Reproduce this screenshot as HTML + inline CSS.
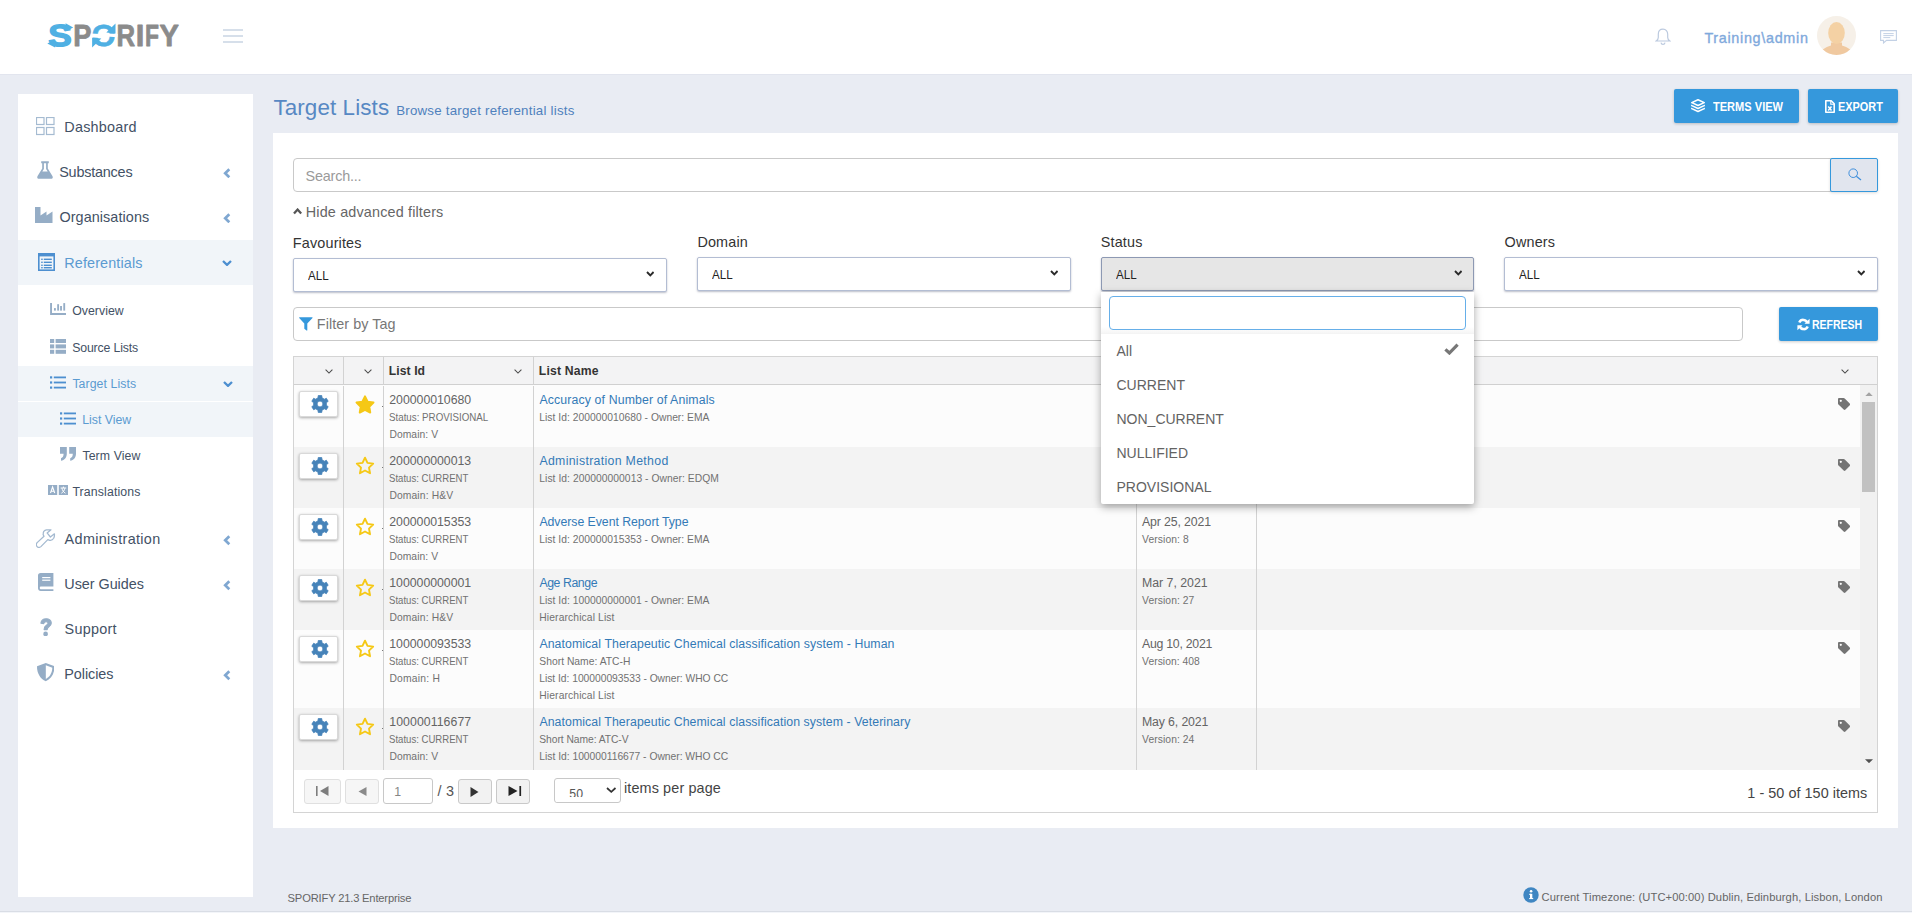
<!DOCTYPE html>
<html lang="en">
<head>
<meta charset="utf-8">
<title>SPORIFY - Target Lists</title>
<style>
*{box-sizing:border-box;margin:0;padding:0}
html,body{width:1912px;height:913px;overflow:hidden}
body{background:#e9ecf3;font-family:"Liberation Sans",sans-serif;color:#333;position:relative;font-size:14px}
.abs{position:absolute}
.t{position:absolute;white-space:nowrap;line-height:1}
#header{position:absolute;left:0;top:0;width:1912px;height:75px;background:#fff;border-bottom:1px solid #e2e5ee}
#sidebar{position:absolute;left:18px;top:94px;width:235px;height:803px;background:#fff}
.hl{position:absolute;left:0;width:235px;background:#f1f4f9}
.m1{font-size:15px;color:#3d4957;letter-spacing:.25px}
.m2{font-size:12.5px;color:#3d4957;letter-spacing:.2px}
.act{color:#5b9bd1}
.chev{position:absolute;left:204px;width:10px;height:12px}
#panel{position:absolute;left:273px;top:133px;width:1625px;height:695px;background:#fff}
.inp{position:absolute;background:#fff;border:1px solid #c9c9c9;border-radius:3px}
.sel{position:absolute;height:35px;background:#fff;border:1px solid #a9b5ce;border-radius:2px;box-shadow:0 1px 2px rgba(0,0,0,.25)}
.sel span{position:absolute;left:15px;top:11px;font-size:13px;color:#222;line-height:1}
.sel svg{position:absolute;right:10px;top:11px}
.lbl{font-size:14.5px;color:#333;letter-spacing:.2px}
.btn{position:absolute;border-radius:2px;background:#3598dc;color:#fff;font-weight:bold;font-size:12px;box-shadow:0 1px 3px rgba(0,0,0,.2)}
#grid{position:absolute;left:293px;top:356px;width:1585px;height:456px;border:1px solid #d5d5d5;background:#fff;overflow:hidden}
.gh{position:absolute;left:0;top:0;width:1583px;height:28px;background:#f3f3f4;border-bottom:1px solid #d5d5d5}
.row{position:absolute;left:0;width:1567px;background:#fbfbfb}
.row.alt{background:#f2f2f2}
.vl{position:absolute;top:0;width:1px;background:#d5d5d5}
.gear{position:absolute;left:5px;width:40px;height:28px;background:#fff;border:1px solid #ccc;box-shadow:0 1px 3px rgba(0,0,0,.3)}
.c1{font-size:12.5px;color:#555;letter-spacing:.3px}
.c2{font-size:10.5px;color:#555;letter-spacing:.2px}
.lnk{font-size:12.5px;color:#337ab7;letter-spacing:.3px}
#dd{z-index:9;position:absolute;left:1101px;top:292px;width:373px;height:212px;background:#fff;box-shadow:0 3px 8px rgba(0,0,0,.35);border-radius:0 0 2px 2px}
.ddi{font-size:14px;color:#555;left:16px}
.pb{position:absolute;height:25px;border:1px solid #c5c5c5;border-radius:3px;background:#f0f0f0}
</style>
</head>
<body>
<div id="header"></div>
<svg class="abs" style="left:40px;top:16px" width="150" height="40" viewBox="40 16 150 40" role="img" aria-label="SPORIFY"><title>SPORIFY</title>
<text font-family="Liberation Sans, sans-serif" font-weight="bold" font-size="30.5" y="46" stroke-width="0.8" stroke-linejoin="round" style="text-rendering:geometricPrecision"><tspan x="48.2" textLength="23.5" lengthAdjust="spacingAndGlyphs" fill="#4fb0e3" stroke="#4fb0e3" stroke-width="1.3">S</tspan><tspan x="73.2" textLength="18.2" lengthAdjust="spacingAndGlyphs" fill="#8b8b8b" stroke="#8b8b8b">P</tspan><tspan x="91.6" textLength="24.2" lengthAdjust="spacingAndGlyphs" fill="#4fb0e3" stroke="#4fb0e3" stroke-width="0.5">O</tspan><tspan x="116.4" textLength="18.6" lengthAdjust="spacingAndGlyphs" fill="#8b8b8b" stroke="#8b8b8b">R</tspan><tspan x="135.8" textLength="8.6" lengthAdjust="spacingAndGlyphs" fill="#8b8b8b" stroke="#8b8b8b">I</tspan><tspan x="144.9" textLength="14" lengthAdjust="spacingAndGlyphs" fill="#8b8b8b" stroke="#8b8b8b">F</tspan><tspan x="159.6" textLength="19.4" lengthAdjust="spacingAndGlyphs" fill="#8b8b8b" stroke="#8b8b8b">Y</tspan></text>
<g fill="#4fb0e3"><path d="M65.6 23.2 73.200 27.500 65.600 31.400z"/><path d="M55.100 39.800 47.300 43.600 55.100 47.500z"/>
<path d="M115.500 23.600 115.500 33.400 106.300 32.600z"/><path d="M92.100 47.600 92.100 37.800 101.300 38.600z"/></g>
<g stroke="#fff" fill="none"><path d="M106.800 35.000 117.500 35.700" stroke-width="3.200"/><path d="M90.500 35.300 100.300 36.000" stroke-width="3.800"/></g>
</svg>
<div class="abs" style="left:223px;top:29px;width:20px;height:2px;background:#d6dfea"></div>
<div class="abs" style="left:223px;top:35px;width:20px;height:2px;background:#d6dfea"></div>
<div class="abs" style="left:223px;top:41px;width:20px;height:2px;background:#d6dfea"></div>
<svg class="abs" style="left:1655px;top:28px" width="16" height="18" viewBox="0 0 16 18" ><path d="M8 1.200c-2.900 0-4.700 2.200-4.700 5v3.300c0 1.500-.8 2.600-2.100 3.500h13.600c-1.300-.9-2.100-2-2.100-3.500V6.200c0-2.800-1.800-5-4.700-5zM6 14.600c.2 1.100 1 1.800 2 1.800s1.800-.7 2-1.800" fill="none" stroke="#bccadf" stroke-width="1.200"/></svg>
<svg class="abs" style="left:1817px;top:16px" width="39" height="39" viewBox="0 0 39 39" ><defs><clipPath id="av"><circle cx="19.5" cy="19.500" r="19.500"/></clipPath></defs><circle cx="19.500" cy="19.500" r="19.500" fill="#f6f0e8"/><g clip-path="url(#av)"><path d="M3 39c1-5.500 5-7.500 11-9.500v-3h11v3c6 2 10 4 11 9.500z" fill="#f0c9a0"/><ellipse cx="19.500" cy="17" rx="8.300" ry="11" fill="#f4d1a4"/></g></svg>
<svg class="abs" style="left:1880px;top:30px" width="17" height="14" viewBox="0 0 17 14" ><path d="M.600.600H16.400V10.400H6.500L3.500 13V10.400H.600z" fill="none" stroke="#c3d1e5" stroke-width="1.100"/><path d="M3.300 3.600h10.400M3.300 5.600h10.400M3.300 7.600h7" stroke="#c3d1e5" stroke-width="1"/></svg>
<div id="sidebar"></div>
<div class="abs" style="left:18px;top:240px;width:235px;height:45px;background:#f1f5f9"></div>
<div class="abs" style="left:18px;top:366px;width:235px;height:35px;background:#f1f5f9"></div>
<div class="abs" style="left:18px;top:402px;width:235px;height:35px;background:#f1f5f9"></div>
<svg class="abs" style="left:36px;top:116.5px" width="19" height="19" viewBox="0 0 19 19" ><rect x="0.5" y="0.5" width="7.5" height="7" fill="none" stroke="#a5bbd1" stroke-width="1.2"/><rect x="0.5" y="10.5" width="7.5" height="7" fill="none" stroke="#a5bbd1" stroke-width="1.2"/><rect x="10.5" y="0.5" width="7.5" height="7" fill="none" stroke="#a5bbd1" stroke-width="1.2"/><rect x="10.5" y="10.5" width="7.5" height="7" fill="none" stroke="#a5bbd1" stroke-width="1.2"/></svg>
<svg class="abs" style="left:36.5px;top:161px" width="16" height="18" viewBox="0 0 16 18" ><path d="M4.2 0.3h7.6v1.9h-1v5.2l4.6 7.6c.9 1.5.1 2.8-1.5 2.8H2.1c-1.600 0-2.400-1.300-1.500-2.800l4.600-7.600V2.200h-1z" fill="#95adc6"/><path d="M6.9 2.200h2.200v5.700l1.600 2.700H5.300l1.600-2.700z" fill="#fff"/></svg>
<svg class="abs" style="left:223px;top:167.7px" width="8" height="10.5" viewBox="0 0 8 10.5" ><path d="M6.300 1.200 2.200 5.250 6.300 9.300" fill="none" stroke="#7fa7d1" stroke-width="2.700"/></svg>
<svg class="abs" style="left:35.2px;top:207px" width="18.5" height="16" viewBox="0 0 18.5 16" ><path d="M0 0h5.500v8.500l6-4v4l6-4V16H0z" fill="#95adc6"/></svg>
<svg class="abs" style="left:223px;top:212.7px" width="8" height="10.5" viewBox="0 0 8 10.5" ><path d="M6.300 1.200 2.200 5.250 6.300 9.300" fill="none" stroke="#7fa7d1" stroke-width="2.700"/></svg>
<svg class="abs" style="left:38px;top:253px" width="17" height="18" viewBox="0 0 17 18" ><rect x="0.8" y="0.8" width="15.4" height="16.400" fill="none" stroke="#4d8fd0" stroke-width="1.6"/><rect x="0.8" y="0.8" width="15.4" height="2.600" fill="#4d8fd0"/><rect x="3.2" y="5.6" width="1.5" height="1.400" fill="#4d8fd0"/><rect x="5.8" y="5.6" width="8" height="1.400" fill="#4d8fd0"/><rect x="3.2" y="8.6" width="1.5" height="1.400" fill="#4d8fd0"/><rect x="5.8" y="8.6" width="8" height="1.400" fill="#4d8fd0"/><rect x="3.2" y="11.6" width="1.5" height="1.400" fill="#4d8fd0"/><rect x="5.8" y="11.6" width="8" height="1.400" fill="#4d8fd0"/><rect x="3.2" y="14.0" width="1.5" height="1.400" fill="#4d8fd0"/><rect x="5.8" y="14.0" width="8" height="1.400" fill="#4d8fd0"/></svg>
<svg class="abs" style="left:222px;top:259.5px" width="10" height="6.5" viewBox="0 0 10 6.5" ><path d="M1 1 5.0 4.9 9 1" fill="none" stroke="#4d8fd0" stroke-width="2.3"/></svg>
<svg class="abs" style="left:50px;top:303px" width="16" height="12" viewBox="0 0 16 12" ><path d="M0.100 0.100h1.900v10h14v1.800H0.100z" fill="#95adc6"/><rect x="4" y="5.1" width="1.850" height="2.50" fill="#95adc6"/><rect x="7.2" y="1.2" width="1.850" height="6.40" fill="#95adc6"/><rect x="10.1" y="3" width="1.850" height="4.60" fill="#95adc6"/><rect x="13.3" y="0.1" width="1.850" height="7.50" fill="#95adc6"/></svg>
<svg class="abs" style="left:50px;top:339px" width="16" height="15" viewBox="0 0 16 15" ><rect x="0" y="0" width="4.2" height="4" fill="#95adc6"/><rect x="5.600" y="0" width="10.400" height="4" fill="#95adc6"/><rect x="0" y="5.4" width="4.2" height="4" fill="#95adc6"/><rect x="5.600" y="5.4" width="10.400" height="4" fill="#95adc6"/><rect x="0" y="10.8" width="4.2" height="4" fill="#95adc6"/><rect x="5.600" y="10.8" width="10.400" height="4" fill="#95adc6"/></svg>
<svg class="abs" style="left:50px;top:375.6px" width="16" height="13" viewBox="0 0 16 13" ><rect x="0" y="0.3" width="2.200" height="2.200" fill="#4d8fd0"/><rect x="3.800" y="0.5" width="12.200" height="1.800" fill="#4d8fd0"/><rect x="0" y="5.4" width="2.200" height="2.200" fill="#4d8fd0"/><rect x="3.800" y="5.6000000000000005" width="12.200" height="1.800" fill="#4d8fd0"/><rect x="0" y="10.5" width="2.200" height="2.200" fill="#4d8fd0"/><rect x="3.800" y="10.7" width="12.200" height="1.800" fill="#4d8fd0"/></svg>
<svg class="abs" style="left:223px;top:380.7px" width="10" height="6.5" viewBox="0 0 10 6.5" ><path d="M1 1 5.0 4.9 9 1" fill="none" stroke="#4d8fd0" stroke-width="2.3"/></svg>
<svg class="abs" style="left:60px;top:411.6px" width="16" height="13" viewBox="0 0 16 13" ><rect x="0" y="0.3" width="2.200" height="2.200" fill="#4d8fd0"/><rect x="3.800" y="0.5" width="12.200" height="1.800" fill="#4d8fd0"/><rect x="0" y="5.4" width="2.200" height="2.200" fill="#4d8fd0"/><rect x="3.800" y="5.6000000000000005" width="12.200" height="1.800" fill="#4d8fd0"/><rect x="0" y="10.5" width="2.200" height="2.200" fill="#4d8fd0"/><rect x="3.800" y="10.7" width="12.200" height="1.800" fill="#4d8fd0"/></svg>
<svg class="abs" style="left:60px;top:447px" width="16" height="14" viewBox="0 0 16 14" ><path d="M0 0h6.800v6.600c0 4-2.200 6.800-5.800 7.200v-2.600c1.800-.6 2.600-2 2.600-4.400H0z" fill="#95adc6"/><path d="M0 0h6.800v6.600c0 4-2.200 6.800-5.800 7.200v-2.600c1.800-.6 2.600-2 2.600-4.400H0z" fill="#95adc6" transform="translate(9.2 0)"/></svg>
<svg class="abs" style="left:48px;top:485px" width="20" height="10" viewBox="0 0 20 10" ><rect x="0" y="0" width="9.2" height="10" fill="#95adc6"/><rect x="10.800" y="0" width="9.2" height="10" fill="#95adc6"/><path d="M2.500 8 4.600 2 6.700 8M3.300 6.200h2.600" stroke="#fff" stroke-width="1.1" fill="none"/><path d="M12.600 3h5.600M15.400 1.600v1.400M13.400 8.200c2-1.200 3-2.800 3.400-5M17.400 8.200c-2-1.200-3-2.800-3.400-5" stroke="#fff" stroke-width="1" fill="none"/></svg>
<svg class="abs" style="left:36px;top:528.5px" width="19.5" height="19.5" viewBox="0 0 19.5 19.5" ><path d="M15 .800 11.100 3.900 14.400 8 18.400 4.800C18.600 6.500 18.400 8 17.700 9.300 16.800 10.800 15.200 11.600 13.700 11.300L11.800 10.600 4.900 17.600C3.600 18.800 2 18.600 1.100 17.600 .200 16.600 .200 15 .900 13.900L8 7.200C7.400 6.400 7.100 5.900 7.200 5.400 7.200 4 7.400 3 7.800 2.400 8.600 1.400 9.400 .900 10.400 .800Z" fill="none" stroke="#a3b9d0" stroke-width="1.250" stroke-linejoin="round"/></svg>
<svg class="abs" style="left:223px;top:535px" width="8" height="10.5" viewBox="0 0 8 10.5" ><path d="M6.300 1.200 2.200 5.250 6.300 9.300" fill="none" stroke="#7fa7d1" stroke-width="2.700"/></svg>
<svg class="abs" style="left:38px;top:573px" width="16" height="18" viewBox="0 0 16 18" ><path d="M2.600 0H15.400v13.600H3.200c-.9 0-1.400.5-1.400 1.300s.5 1.300 1.400 1.300H15.400V18H2.800C1.100 18 0 16.900 0 15.300V2.600C0 1 1 0 2.600 0z" fill="#95adc6"/><rect x="4.200" y="4" width="8.200" height="1.200" fill="#fff"/><rect x="4.200" y="6.600" width="8.200" height="1.200" fill="#fff"/></svg>
<svg class="abs" style="left:223px;top:580px" width="8" height="10.5" viewBox="0 0 8 10.5" ><path d="M6.300 1.200 2.200 5.250 6.300 9.300" fill="none" stroke="#7fa7d1" stroke-width="2.700"/></svg>
<svg class="abs" style="left:38.5px;top:617.7px" width="14" height="18.5" viewBox="-0.500 0 14 18.500" ><path d="M1.400 5.200C1.800 2.300 3.800.7 6.600.7c3 0 5.200 1.700 5.200 4.400 0 2.100-1.200 3.100-2.600 4-1.100.7-1.500 1.200-1.500 2.500H4.600c0-2.300.7-3.300 2.300-4.300 1-.6 1.600-1.100 1.600-2 0-1-.8-1.700-2-1.700-1.300 0-2.100.7-2.300 2z" fill="#95adc6" stroke="#95adc6" stroke-width="1.100" stroke-linejoin="round"/><circle cx="6.100" cy="15.900" r="2.350" fill="#95adc6"/></svg>
<svg class="abs" style="left:36.7px;top:663px" width="17.5" height="18.5" viewBox="0 0 17.5 18.5" ><path d="M8.800 0 17.500 3.200c0 7.400-3.300 12.600-8.700 15C3.300 15.800 0 10.600 0 3.200z" fill="#95adc6"/><path d="M8.800 2.300 15.300 4.700C15.100 10 12.800 13.800 8.800 15.900z" fill="#fff"/></svg>
<svg class="abs" style="left:223px;top:670px" width="8" height="10.5" viewBox="0 0 8 10.5" ><path d="M6.300 1.200 2.200 5.250 6.300 9.300" fill="none" stroke="#7fa7d1" stroke-width="2.700"/></svg>
<div class="btn" style="left:1674px;top:89px;width:125px;height:34px"></div>
<svg class="abs" style="left:1691px;top:99.3px" width="14" height="13.5" viewBox="0 0 14 13.5" ><path d="M7 .700 13.200 3.600 7 6.500.800 3.600zM1.300 6.300.800 6.600 7 9.500 13.200 6.600 12.700 6.300M1.300 9.300.800 9.600 7 12.500 13.200 9.600 12.700 9.300" fill="none" stroke="#fff" stroke-width="1.600" stroke-linejoin="round"/></svg>
<div class="btn" style="left:1808px;top:89px;width:90px;height:34px"></div>
<svg class="abs" style="left:1825px;top:100px" width="10" height="13" viewBox="0 0 10 13" ><path d="M.800.800H6.200L9.200 3.800V12.200H.800z" fill="none" stroke="#fff" stroke-width="1.600" stroke-linejoin="round"/><path d="M5.800 .800V4.200h3.400" fill="none" stroke="#fff" stroke-width="1.100"/><path d="M3.200 6.600 6.500 10.600M6.500 6.600 3.200 10.600" stroke="#fff" stroke-width="1.500"/></svg>
<div id="panel"></div>
<div class="inp" style="left:293px;top:158px;width:1539px;height:34px;border-radius:4px 0 0 4px"></div>
<div class="abs" style="left:1830px;top:158px;width:48px;height:34px;background:#e1e5ee;border:1px solid #3598dc;border-radius:2px;box-shadow:0 1px 3px rgba(0,0,0,.14)"></div>
<svg class="abs" style="left:1847.5px;top:168.3px" width="14" height="13" viewBox="0 0 14 13" ><circle cx="5.200" cy="5.200" r="4.300" fill="none" stroke="#3f8fdc" stroke-width="1"/><path d="M8.300 8.300 13 12" stroke="#3f8fdc" stroke-width="1.200"/></svg>
<svg class="abs" style="left:293.1px;top:208.3px" width="9.2" height="6.6" viewBox="0 0 9.2 6.6" ><path d="M1 5.6 4.6 1.600 8.2 5.6" fill="none" stroke="#555" stroke-width="2.3"/></svg>
<div class="abs" style="left:293px;top:258px;width:374px;height:34px;background:#fff;border:1px solid #b3bdd3;border-radius:2px;box-shadow:0 1px 2px rgba(60,70,100,.35)"></div>
<svg class="abs" style="left:645.5px;top:270.8px" width="8.6" height="6" viewBox="0 0 8.6 6" ><path d="M1 1 4.3 4.4 7.6 1" fill="none" stroke="#2a2a2a" stroke-width="1.9"/></svg>
<div class="abs" style="left:697px;top:257px;width:374px;height:34px;background:#fff;border:1px solid #b3bdd3;border-radius:2px;box-shadow:0 1px 2px rgba(60,70,100,.35)"></div>
<svg class="abs" style="left:1049.5px;top:269.8px" width="8.6" height="6" viewBox="0 0 8.6 6" ><path d="M1 1 4.3 4.4 7.6 1" fill="none" stroke="#2a2a2a" stroke-width="1.9"/></svg>
<div class="abs" style="left:1101px;top:257px;width:373px;height:34px;background:#e6e6e6;border:1px solid #8d99b3;border-radius:2px;box-shadow:0 1px 2px rgba(60,70,100,.35)"></div>
<svg class="abs" style="left:1453.5px;top:269.8px" width="8.6" height="6" viewBox="0 0 8.6 6" ><path d="M1 1 4.3 4.4 7.6 1" fill="none" stroke="#2a2a2a" stroke-width="1.9"/></svg>
<div class="abs" style="left:1504px;top:257px;width:374px;height:34px;background:#fff;border:1px solid #b3bdd3;border-radius:2px;box-shadow:0 1px 2px rgba(60,70,100,.35)"></div>
<svg class="abs" style="left:1856.5px;top:269.8px" width="8.6" height="6" viewBox="0 0 8.6 6" ><path d="M1 1 4.3 4.4 7.6 1" fill="none" stroke="#2a2a2a" stroke-width="1.9"/></svg>
<div class="inp" style="left:293px;top:307px;width:1450px;height:34px;border-radius:4px"></div>
<svg class="abs" style="left:299px;top:316.5px" width="14" height="14.5" viewBox="0 0 14 14.5" ><path d="M.500.300H13.200c.4 0 .5.400.3.700L8.300 6.400V13.200c0 .4-.4.600-.7.400L5.600 12.100c-.2-.1-.3-.3-.3-.600V6.400L.200 1C0 .700.100.300.500.300z" fill="#3598dc"/></svg>
<div class="btn" style="left:1779px;top:307px;width:99px;height:34px"></div>
<svg class="abs" style="left:1796.5px;top:318px" width="13" height="13" viewBox="0 0 13 13" ><path d="M10.300 4.700A4.300 4.300 0 0 0 2.300 4.500M2.700 8.300A4.300 4.300 0 0 0 10.700 8.500" fill="none" stroke="#fff" stroke-width="2.500"/><path d="M12.600.700V5.800H7.500zM.400 12.300V7.200H5.500z" fill="#fff"/></svg>
<div class="abs" style="left:293px;top:356px;width:1585px;height:457px;border:1px solid #d4d4d4;background:#fff"></div>
<div class="abs" style="left:294px;top:357px;width:1583px;height:27px;background:#f3f3f4"></div>
<div class="abs" style="left:294px;top:384px;width:1583px;height:1px;background:#d0d0d0"></div>
<div class="abs" style="left:294px;top:385px;width:1566px;height:62px;background:#fcfcfc"></div>
<div class="abs" style="left:294px;top:447px;width:1566px;height:61px;background:#f3f3f3"></div>
<div class="abs" style="left:294px;top:508px;width:1566px;height:61px;background:#fcfcfc"></div>
<div class="abs" style="left:294px;top:569px;width:1566px;height:61px;background:#f3f3f3"></div>
<div class="abs" style="left:294px;top:630px;width:1566px;height:78px;background:#fcfcfc"></div>
<div class="abs" style="left:294px;top:708px;width:1566px;height:62px;background:#f3f3f3"></div>
<div class="abs" style="left:1860px;top:385px;width:17px;height:385px;background:#f1f1f1"></div>
<div class="abs" style="left:1862px;top:402px;width:13px;height:90px;background:#c1c1c1"></div>
<svg class="abs" style="left:1864.7px;top:391.7px" width="8" height="4.5" viewBox="0 0 8 4.5" ><path d="M0 4.300 4 .300 8 4.300z" fill="#a3a3a3"/></svg>
<svg class="abs" style="left:1864.7px;top:758.7px" width="8" height="4.5" viewBox="0 0 8 4.5" ><path d="M0 .200 4 4.200 8 .200z" fill="#505050"/></svg>
<div class="abs" style="left:343px;top:357px;width:1px;height:28px;background:#d2d2d2"></div>
<div class="abs" style="left:343px;top:386px;width:1px;height:384px;background:#d2d2d2"></div>
<div class="abs" style="left:383px;top:357px;width:1px;height:28px;background:#d2d2d2"></div>
<div class="abs" style="left:383px;top:386px;width:1px;height:384px;background:#d2d2d2"></div>
<div class="abs" style="left:533px;top:357px;width:1px;height:28px;background:#d2d2d2"></div>
<div class="abs" style="left:533px;top:386px;width:1px;height:384px;background:#d2d2d2"></div>
<div class="abs" style="left:1136px;top:357px;width:1px;height:28px;background:#d2d2d2"></div>
<div class="abs" style="left:1136px;top:386px;width:1px;height:384px;background:#d2d2d2"></div>
<div class="abs" style="left:1256px;top:357px;width:1px;height:28px;background:#d2d2d2"></div>
<div class="abs" style="left:1256px;top:386px;width:1px;height:384px;background:#d2d2d2"></div>
<svg class="abs" style="left:324.8px;top:369px" width="8" height="5" viewBox="0 0 8 5" ><path d="M.6.700 4 4.100 7.400.700" fill="none" stroke="#4a4a4a" stroke-width="1.050"/></svg>
<svg class="abs" style="left:364.4px;top:369px" width="8" height="5" viewBox="0 0 8 5" ><path d="M.6.700 4 4.100 7.400.700" fill="none" stroke="#4a4a4a" stroke-width="1.050"/></svg>
<svg class="abs" style="left:514.4px;top:369px" width="8" height="5" viewBox="0 0 8 5" ><path d="M.6.700 4 4.100 7.400.700" fill="none" stroke="#4a4a4a" stroke-width="1.050"/></svg>
<svg class="abs" style="left:1841.4px;top:369px" width="8" height="5" viewBox="0 0 8 5" ><path d="M.6.700 4 4.100 7.400.700" fill="none" stroke="#4a4a4a" stroke-width="1.050"/></svg>
<div class="abs" style="left:299px;top:391px;width:39px;height:26px;background:#fff;border:1px solid #d9d9d9;border-radius:2px;box-shadow:0 1px 3px rgba(0,0,0,.33)"></div>
<svg class="abs" style="left:311px;top:395px" width="18" height="18" viewBox="0 0 18 18" ><path d="M6.99 2.82 L7.21 0.59 L10.79 0.59 L11.01 2.82 L13.35 4.17 L15.39 3.25 L17.18 6.34 L15.36 7.65 L15.36 10.35 L17.18 11.66 L15.39 14.75 L13.35 13.83 L11.01 15.18 L10.79 17.41 L7.21 17.41 L6.99 15.18 L4.65 13.83 L2.61 14.75 L0.82 11.66 L2.64 10.35 L2.64 7.65 L0.82 6.34 L2.61 3.25 L4.65 4.17Z M11.90 9.00 A2.9 2.9 0 1 0 6.10 9.00 A2.9 2.9 0 1 0 11.90 9.00Z" fill="#4683b9" fill-rule="evenodd" stroke="#4683b9" stroke-width="0.8" stroke-linejoin="round"/></svg>
<svg class="abs" style="left:355px;top:394.7px" width="20" height="19" viewBox="0 0 20 19" ><path d="M10.00 1.40 L12.65 6.66 L18.46 7.55 L14.28 11.69 L15.23 17.50 L10.00 14.80 L4.77 17.50 L5.72 11.69 L1.54 7.55 L7.35 6.66Z" fill="#f5c816" stroke="#f5c816" stroke-width="2" stroke-linejoin="round"/></svg>
<div class="abs" style="left:382px;top:406px;width:1px;height:1px;background:#777"></div>
<svg class="abs" style="left:1837.7px;top:398px" width="12.5" height="12.5" viewBox="0 0 13 13" ><path d="M0 1.200C0 .5.500 0 1.200 0H5.800c.5 0 .9.200 1.200.5l5.200 5.200c.5.500.5 1.300 0 1.800L7.700 12c-.5.500-1.300.5-1.800 0L.5 6.800C.2 6.500 0 6.100 0 5.600z" fill="#747474"/><circle cx="2.900" cy="2.900" r="1.150" fill="#fff"/></svg>
<div class="abs" style="left:299px;top:453px;width:39px;height:26px;background:#fff;border:1px solid #d9d9d9;border-radius:2px;box-shadow:0 1px 3px rgba(0,0,0,.33)"></div>
<svg class="abs" style="left:311px;top:457px" width="18" height="18" viewBox="0 0 18 18" ><path d="M6.99 2.82 L7.21 0.59 L10.79 0.59 L11.01 2.82 L13.35 4.17 L15.39 3.25 L17.18 6.34 L15.36 7.65 L15.36 10.35 L17.18 11.66 L15.39 14.75 L13.35 13.83 L11.01 15.18 L10.79 17.41 L7.21 17.41 L6.99 15.18 L4.65 13.83 L2.61 14.75 L0.82 11.66 L2.64 10.35 L2.64 7.65 L0.82 6.34 L2.61 3.25 L4.65 4.17Z M11.90 9.00 A2.9 2.9 0 1 0 6.10 9.00 A2.9 2.9 0 1 0 11.90 9.00Z" fill="#4683b9" fill-rule="evenodd" stroke="#4683b9" stroke-width="0.8" stroke-linejoin="round"/></svg>
<svg class="abs" style="left:355px;top:455.7px" width="20" height="19" viewBox="0 0 20 19" ><path d="M10.00 1.70 L12.47 6.90 L18.18 7.64 L13.99 11.60 L15.05 17.26 L10.00 14.50 L4.95 17.26 L6.01 11.60 L1.82 7.64 L7.53 6.90Z" fill="none" stroke="#f5c816" stroke-width="1.900" stroke-linejoin="round"/></svg>
<div class="abs" style="left:382px;top:467px;width:1px;height:1px;background:#777"></div>
<svg class="abs" style="left:1837.7px;top:459px" width="12.5" height="12.5" viewBox="0 0 13 13" ><path d="M0 1.200C0 .5.500 0 1.200 0H5.800c.5 0 .9.200 1.200.5l5.200 5.200c.5.500.5 1.300 0 1.800L7.700 12c-.5.500-1.300.5-1.800 0L.5 6.800C.2 6.500 0 6.100 0 5.600z" fill="#747474"/><circle cx="2.900" cy="2.900" r="1.150" fill="#fff"/></svg>
<div class="abs" style="left:299px;top:514px;width:39px;height:26px;background:#fff;border:1px solid #d9d9d9;border-radius:2px;box-shadow:0 1px 3px rgba(0,0,0,.33)"></div>
<svg class="abs" style="left:311px;top:518px" width="18" height="18" viewBox="0 0 18 18" ><path d="M6.99 2.82 L7.21 0.59 L10.79 0.59 L11.01 2.82 L13.35 4.17 L15.39 3.25 L17.18 6.34 L15.36 7.65 L15.36 10.35 L17.18 11.66 L15.39 14.75 L13.35 13.83 L11.01 15.18 L10.79 17.41 L7.21 17.41 L6.99 15.18 L4.65 13.83 L2.61 14.75 L0.82 11.66 L2.64 10.35 L2.64 7.65 L0.82 6.34 L2.61 3.25 L4.65 4.17Z M11.90 9.00 A2.9 2.9 0 1 0 6.10 9.00 A2.9 2.9 0 1 0 11.90 9.00Z" fill="#4683b9" fill-rule="evenodd" stroke="#4683b9" stroke-width="0.8" stroke-linejoin="round"/></svg>
<svg class="abs" style="left:355px;top:516.7px" width="20" height="19" viewBox="0 0 20 19" ><path d="M10.00 1.70 L12.47 6.90 L18.18 7.64 L13.99 11.60 L15.05 17.26 L10.00 14.50 L4.95 17.26 L6.01 11.60 L1.82 7.64 L7.53 6.90Z" fill="none" stroke="#f5c816" stroke-width="1.900" stroke-linejoin="round"/></svg>
<div class="abs" style="left:382px;top:528px;width:1px;height:1px;background:#777"></div>
<svg class="abs" style="left:1837.7px;top:520px" width="12.5" height="12.5" viewBox="0 0 13 13" ><path d="M0 1.200C0 .5.500 0 1.200 0H5.800c.5 0 .9.200 1.200.5l5.200 5.200c.5.500.5 1.300 0 1.800L7.700 12c-.5.500-1.300.5-1.800 0L.5 6.800C.2 6.500 0 6.100 0 5.600z" fill="#747474"/><circle cx="2.900" cy="2.900" r="1.150" fill="#fff"/></svg>
<div class="abs" style="left:299px;top:575px;width:39px;height:26px;background:#fff;border:1px solid #d9d9d9;border-radius:2px;box-shadow:0 1px 3px rgba(0,0,0,.33)"></div>
<svg class="abs" style="left:311px;top:579px" width="18" height="18" viewBox="0 0 18 18" ><path d="M6.99 2.82 L7.21 0.59 L10.79 0.59 L11.01 2.82 L13.35 4.17 L15.39 3.25 L17.18 6.34 L15.36 7.65 L15.36 10.35 L17.18 11.66 L15.39 14.75 L13.35 13.83 L11.01 15.18 L10.79 17.41 L7.21 17.41 L6.99 15.18 L4.65 13.83 L2.61 14.75 L0.82 11.66 L2.64 10.35 L2.64 7.65 L0.82 6.34 L2.61 3.25 L4.65 4.17Z M11.90 9.00 A2.9 2.9 0 1 0 6.10 9.00 A2.9 2.9 0 1 0 11.90 9.00Z" fill="#4683b9" fill-rule="evenodd" stroke="#4683b9" stroke-width="0.8" stroke-linejoin="round"/></svg>
<svg class="abs" style="left:355px;top:577.7px" width="20" height="19" viewBox="0 0 20 19" ><path d="M10.00 1.70 L12.47 6.90 L18.18 7.64 L13.99 11.60 L15.05 17.26 L10.00 14.50 L4.95 17.26 L6.01 11.60 L1.82 7.64 L7.53 6.90Z" fill="none" stroke="#f5c816" stroke-width="1.900" stroke-linejoin="round"/></svg>
<div class="abs" style="left:382px;top:589px;width:1px;height:1px;background:#777"></div>
<svg class="abs" style="left:1837.7px;top:581px" width="12.5" height="12.5" viewBox="0 0 13 13" ><path d="M0 1.200C0 .5.500 0 1.200 0H5.800c.5 0 .9.200 1.200.5l5.200 5.200c.5.500.5 1.300 0 1.800L7.700 12c-.5.500-1.300.5-1.800 0L.5 6.800C.2 6.500 0 6.100 0 5.600z" fill="#747474"/><circle cx="2.900" cy="2.900" r="1.150" fill="#fff"/></svg>
<div class="abs" style="left:299px;top:636px;width:39px;height:26px;background:#fff;border:1px solid #d9d9d9;border-radius:2px;box-shadow:0 1px 3px rgba(0,0,0,.33)"></div>
<svg class="abs" style="left:311px;top:640px" width="18" height="18" viewBox="0 0 18 18" ><path d="M6.99 2.82 L7.21 0.59 L10.79 0.59 L11.01 2.82 L13.35 4.17 L15.39 3.25 L17.18 6.34 L15.36 7.65 L15.36 10.35 L17.18 11.66 L15.39 14.75 L13.35 13.83 L11.01 15.18 L10.79 17.41 L7.21 17.41 L6.99 15.18 L4.65 13.83 L2.61 14.75 L0.82 11.66 L2.64 10.35 L2.64 7.65 L0.82 6.34 L2.61 3.25 L4.65 4.17Z M11.90 9.00 A2.9 2.9 0 1 0 6.10 9.00 A2.9 2.9 0 1 0 11.90 9.00Z" fill="#4683b9" fill-rule="evenodd" stroke="#4683b9" stroke-width="0.8" stroke-linejoin="round"/></svg>
<svg class="abs" style="left:355px;top:638.7px" width="20" height="19" viewBox="0 0 20 19" ><path d="M10.00 1.70 L12.47 6.90 L18.18 7.64 L13.99 11.60 L15.05 17.26 L10.00 14.50 L4.95 17.26 L6.01 11.60 L1.82 7.64 L7.53 6.90Z" fill="none" stroke="#f5c816" stroke-width="1.900" stroke-linejoin="round"/></svg>
<div class="abs" style="left:382px;top:650px;width:1px;height:1px;background:#777"></div>
<svg class="abs" style="left:1837.7px;top:642px" width="12.5" height="12.5" viewBox="0 0 13 13" ><path d="M0 1.200C0 .5.500 0 1.200 0H5.800c.5 0 .9.200 1.200.5l5.200 5.200c.5.500.5 1.300 0 1.800L7.700 12c-.5.500-1.300.5-1.800 0L.5 6.800C.2 6.500 0 6.100 0 5.600z" fill="#747474"/><circle cx="2.900" cy="2.900" r="1.150" fill="#fff"/></svg>
<div class="abs" style="left:299px;top:714px;width:39px;height:26px;background:#fff;border:1px solid #d9d9d9;border-radius:2px;box-shadow:0 1px 3px rgba(0,0,0,.33)"></div>
<svg class="abs" style="left:311px;top:718px" width="18" height="18" viewBox="0 0 18 18" ><path d="M6.99 2.82 L7.21 0.59 L10.79 0.59 L11.01 2.82 L13.35 4.17 L15.39 3.25 L17.18 6.34 L15.36 7.65 L15.36 10.35 L17.18 11.66 L15.39 14.75 L13.35 13.83 L11.01 15.18 L10.79 17.41 L7.21 17.41 L6.99 15.18 L4.65 13.83 L2.61 14.75 L0.82 11.66 L2.64 10.35 L2.64 7.65 L0.82 6.34 L2.61 3.25 L4.65 4.17Z M11.90 9.00 A2.9 2.9 0 1 0 6.10 9.00 A2.9 2.9 0 1 0 11.90 9.00Z" fill="#4683b9" fill-rule="evenodd" stroke="#4683b9" stroke-width="0.8" stroke-linejoin="round"/></svg>
<svg class="abs" style="left:355px;top:716.7px" width="20" height="19" viewBox="0 0 20 19" ><path d="M10.00 1.70 L12.47 6.90 L18.18 7.64 L13.99 11.60 L15.05 17.26 L10.00 14.50 L4.95 17.26 L6.01 11.60 L1.82 7.64 L7.53 6.90Z" fill="none" stroke="#f5c816" stroke-width="1.900" stroke-linejoin="round"/></svg>
<div class="abs" style="left:382px;top:728px;width:1px;height:1px;background:#777"></div>
<svg class="abs" style="left:1837.7px;top:720px" width="12.5" height="12.5" viewBox="0 0 13 13" ><path d="M0 1.200C0 .5.500 0 1.200 0H5.800c.5 0 .9.200 1.200.5l5.200 5.200c.5.500.5 1.300 0 1.800L7.700 12c-.5.500-1.300.5-1.800 0L.5 6.800C.2 6.500 0 6.100 0 5.600z" fill="#747474"/><circle cx="2.900" cy="2.900" r="1.150" fill="#fff"/></svg>
<div class="abs" style="left:304px;top:779px;width:37px;height:25px;background:#f6f6f6;border:1px solid #e0e0e0;border-radius:3px"></div>
<div class="abs" style="left:345px;top:779px;width:34px;height:25px;background:#f6f6f6;border:1px solid #e0e0e0;border-radius:3px"></div>
<div class="abs" style="left:458px;top:779px;width:34px;height:25px;background:#f2f2f2;border:1px solid #c9c9c9;border-radius:3px"></div>
<div class="abs" style="left:496px;top:779px;width:34px;height:25px;background:#f2f2f2;border:1px solid #c9c9c9;border-radius:3px"></div>
<svg class="abs" style="left:315.5px;top:786.3px" width="14" height="10" viewBox="0 0 14 10" ><rect x="0" y="0" width="1.600" height="10" fill="#7d7d7d"/><path d="M12.500 0V10L4 5z" fill="#7d7d7d"/></svg>
<svg class="abs" style="left:358px;top:787px" width="9" height="9" viewBox="0 0 9 9" ><path d="M8.500 0V9L.500 4.500z" fill="#8a8a8a"/></svg>
<svg class="abs" style="left:470px;top:786.5px" width="9" height="10" viewBox="0 0 9 10" ><path d="M.500 0V10L8.500 5z" fill="#333"/></svg>
<svg class="abs" style="left:507.5px;top:786.3px" width="14" height="10" viewBox="0 0 14 10" ><rect x="11.400" y="0" width="1.700" height="10" fill="#222"/><path d="M.500 0V10L9.500 5z" fill="#222"/></svg>
<div class="abs" style="left:383px;top:778px;width:50px;height:26px;background:#fff;border:1px solid #c8c8c8;border-radius:3px"></div>
<div class="abs" style="left:554px;top:778px;width:67px;height:25px;background:#fff;border:1px solid #c8c8c8;border-radius:3px;overflow:hidden"><span class="t" style="left:14.300px;top:8.800px;font-size:12.3px;color:#555">50</span><i style="position:absolute;left:1px;top:18px;width:45px;height:6px;background:#fff"></i></div>
<svg class="abs" style="left:606px;top:787.3px" width="10.5" height="6.5" viewBox="0 0 10.5 6.5" ><path d="M1 1 5.25 4.9 9.5 1" fill="none" stroke="#333" stroke-width="1.7"/></svg>
<div id="dd"></div>
<div class="abs" style="z-index:10;left:1101px;top:292px;width:373px;height:42px;background:linear-gradient(#fff 85%,#f6f6f6);border-bottom:1px solid #f4f4f4"></div>
<div class="abs" style="z-index:10;left:1109px;top:296px;width:357px;height:34px;background:#fff;border:1px solid #66afe9;border-radius:4px"></div>
<svg class="abs" style="left:1443.5px;top:342px;z-index:11" width="15" height="13" viewBox="0 0 15 13" ><path d="M1.400 7.300 5.400 11 13.600 2.600" fill="none" stroke="#777" stroke-width="3.200"/></svg>
<svg class="abs" style="left:1523px;top:887px" width="16" height="16" viewBox="0 0 16 16" ><circle cx="8" cy="8" r="7.700" fill="#3f86c2"/><rect x="7" y="6.800" width="2.300" height="5" fill="#fff"/><rect x="6.200" y="6.800" width="2" height="1.100" fill="#fff"/><rect x="6.200" y="11" width="4" height="1.100" fill="#fff"/><circle cx="8.100" cy="4.300" r="1.300" fill="#fff"/></svg>
<div class="abs" style="left:0;top:911px;width:1912px;height:1px;background:#d9dde5"></div>
<div class="abs" style="left:0;top:912px;width:1912px;height:1px;background:#f3f5f9"></div>
<span class="t" id="t0" style="left:1704.40px;top:31.00px;font-size:14.4px;color:#7fa9dc;letter-spacing:0.681px;-webkit-text-stroke:0.35px #7fa9dc;">Training\admin</span>
<span class="t" id="t1" style="left:64.30px;top:120.00px;font-size:14.4px;color:#435165;letter-spacing:0.225px;">Dashboard</span>
<span class="t" id="t2" style="left:59.20px;top:165.00px;font-size:14.4px;color:#435165;letter-spacing:-0.200px;">Substances</span>
<span class="t" id="t3" style="left:59.40px;top:210.00px;font-size:14.4px;color:#435165;letter-spacing:0.084px;">Organisations</span>
<span class="t" id="t4" style="left:64.30px;top:256.00px;font-size:14.4px;color:#5b9bd1;letter-spacing:0.119px;">Referentials</span>
<span class="t" id="t5" style="left:72.20px;top:305.00px;font-size:12.3px;color:#435165;letter-spacing:0.033px;">Overview</span>
<span class="t" id="t6" style="left:72.20px;top:342.00px;font-size:12.3px;color:#435165;letter-spacing:-0.156px;">Source Lists</span>
<span class="t" id="t7" style="left:72.40px;top:378.00px;font-size:12.3px;color:#5b9bd1;letter-spacing:0.070px;">Target Lists</span>
<span class="t" id="t8" style="left:82.20px;top:414.00px;font-size:12.3px;color:#5b9bd1;">List View</span>
<span class="t" id="t9" style="left:82.40px;top:450.00px;font-size:12.3px;color:#435165;letter-spacing:0.101px;">Term View</span>
<span class="t" id="t10" style="left:72.40px;top:486.00px;font-size:12.3px;color:#435165;letter-spacing:0.139px;">Translations</span>
<span class="t" id="t11" style="left:64.60px;top:532.00px;font-size:14.4px;color:#435165;letter-spacing:0.340px;">Administration</span>
<span class="t" id="t12" style="left:64.30px;top:577.00px;font-size:14.4px;color:#435165;letter-spacing:-0.038px;">User Guides</span>
<span class="t" id="t13" style="left:64.50px;top:622.00px;font-size:14.4px;color:#435165;letter-spacing:0.283px;">Support</span>
<span class="t" id="t14" style="left:64.30px;top:667.00px;font-size:14.4px;color:#435165;letter-spacing:-0.070px;">Policies</span>
<span class="t" id="t15" style="left:273.40px;top:97.00px;font-size:22.4px;color:#5788c3;letter-spacing:0.110px;">Target Lists</span>
<span class="t" id="t16" style="left:396.20px;top:104.00px;font-size:13.3px;color:#4f81bd;letter-spacing:0.223px;">Browse target referential lists</span>
<span class="t" id="t17" style="left:1712.80px;top:101.00px;font-size:12.8px;color:#fff;font-weight:bold;transform-origin:0 0;transform:scaleX(0.8637);">TERMS VIEW</span>
<span class="t" id="t18" style="left:1837.80px;top:101.00px;font-size:12.8px;color:#fff;font-weight:bold;transform-origin:0 0;transform:scaleX(0.8522);">EXPORT</span>
<span class="t" id="t19" style="left:305.60px;top:169.00px;font-size:14.4px;color:#9a9a9a;letter-spacing:-0.199px;">Search...</span>
<span class="t" id="t20" style="left:305.80px;top:205.00px;font-size:14.4px;color:#666;letter-spacing:0.156px;">Hide advanced filters</span>
<span class="t" id="t21" style="left:292.80px;top:236.00px;font-size:14.4px;color:#333;letter-spacing:0.168px;">Favourites</span>
<span class="t" id="t22" style="left:697.40px;top:235.00px;font-size:14.4px;color:#333;letter-spacing:0.150px;">Domain</span>
<span class="t" id="t23" style="left:1100.80px;top:235.00px;font-size:14.4px;color:#333;letter-spacing:0.150px;">Status</span>
<span class="t" id="t24" style="left:1504.60px;top:235.00px;font-size:14.4px;color:#333;letter-spacing:0.150px;">Owners</span>
<span class="t" id="t25" style="left:308.20px;top:270.00px;font-size:12.3px;color:#222;transform-origin:0 0;transform:scaleX(0.9437);">ALL</span>
<span class="t" id="t26" style="left:712.20px;top:269.00px;font-size:12.3px;color:#222;transform-origin:0 0;transform:scaleX(0.9437);">ALL</span>
<span class="t" id="t27" style="left:1116.20px;top:269.00px;font-size:12.3px;color:#222;transform-origin:0 0;transform:scaleX(0.9437);">ALL</span>
<span class="t" id="t28" style="left:1519.20px;top:269.00px;font-size:12.3px;color:#222;transform-origin:0 0;transform:scaleX(0.9437);">ALL</span>
<span class="t" id="t29" style="left:316.80px;top:317.00px;font-size:14.4px;color:#777;letter-spacing:0.052px;">Filter by Tag</span>
<span class="t" id="t30" style="left:1812.30px;top:319.00px;font-size:12.8px;color:#fff;font-weight:bold;transform-origin:0 0;transform:scaleX(0.8209);">REFRESH</span>
<span class="t" id="t31" style="left:388.80px;top:365.00px;font-size:12.2px;color:#333;font-weight:bold;letter-spacing:0.060px;">List Id</span>
<span class="t" id="t32" style="left:538.80px;top:365.00px;font-size:12.2px;color:#333;font-weight:bold;letter-spacing:0.191px;">List Name</span>
<span class="t" id="t33" style="left:389.30px;top:394.00px;font-size:12.3px;color:#646464;letter-spacing:-0.021px;">200000010680</span>
<span class="t" id="t34" style="left:389.40px;top:413.00px;font-size:10.3px;color:#717171;transform-origin:0 0;transform:scaleX(0.9476);">Status: PROVISIONAL</span>
<span class="t" id="t35" style="left:389.40px;top:430.00px;font-size:10.3px;color:#717171;letter-spacing:0.075px;">Domain: V</span>
<span class="t" id="t36" style="left:539.40px;top:394.00px;font-size:12.3px;color:#337ab7;letter-spacing:0.133px;">Accuracy of Number of Animals</span>
<span class="t" id="t37" style="left:539.30px;top:413.00px;font-size:10.3px;color:#717171;letter-spacing:0.022px;">List Id: 200000010680 - Owner: EMA</span>
<span class="t" id="t38" style="left:389.30px;top:455.00px;font-size:12.3px;color:#646464;letter-spacing:-0.021px;">200000000013</span>
<span class="t" id="t39" style="left:389.40px;top:474.00px;font-size:10.3px;color:#717171;transform-origin:0 0;transform:scaleX(0.9307);">Status: CURRENT</span>
<span class="t" id="t40" style="left:389.40px;top:491.00px;font-size:10.3px;color:#717171;letter-spacing:0.129px;">Domain: H&amp;V</span>
<span class="t" id="t41" style="left:539.40px;top:455.00px;font-size:12.3px;color:#337ab7;letter-spacing:0.325px;">Administration Method</span>
<span class="t" id="t42" style="left:539.30px;top:474.00px;font-size:10.3px;color:#717171;letter-spacing:0.046px;">List Id: 200000000013 - Owner: EDQM</span>
<span class="t" id="t43" style="left:389.30px;top:516.00px;font-size:12.3px;color:#646464;letter-spacing:-0.021px;">200000015353</span>
<span class="t" id="t44" style="left:389.40px;top:535.00px;font-size:10.3px;color:#717171;transform-origin:0 0;transform:scaleX(0.9307);">Status: CURRENT</span>
<span class="t" id="t45" style="left:389.40px;top:552.00px;font-size:10.3px;color:#717171;letter-spacing:0.075px;">Domain: V</span>
<span class="t" id="t46" style="left:539.40px;top:516.00px;font-size:12.3px;color:#337ab7;letter-spacing:-0.043px;">Adverse Event Report Type</span>
<span class="t" id="t47" style="left:539.30px;top:535.00px;font-size:10.3px;color:#717171;letter-spacing:0.022px;">List Id: 200000015353 - Owner: EMA</span>
<span class="t" id="t48" style="left:1142.00px;top:516.00px;font-size:12.3px;color:#646464;letter-spacing:-0.125px;">Apr 25, 2021</span>
<span class="t" id="t49" style="left:1142.10px;top:535.00px;font-size:10.3px;color:#717171;letter-spacing:0.082px;">Version: 8</span>
<span class="t" id="t50" style="left:389.30px;top:577.00px;font-size:12.3px;color:#646464;letter-spacing:-0.021px;">100000000001</span>
<span class="t" id="t51" style="left:389.40px;top:596.00px;font-size:10.3px;color:#717171;transform-origin:0 0;transform:scaleX(0.9307);">Status: CURRENT</span>
<span class="t" id="t52" style="left:389.40px;top:613.00px;font-size:10.3px;color:#717171;letter-spacing:0.129px;">Domain: H&amp;V</span>
<span class="t" id="t53" style="left:539.40px;top:577.00px;font-size:12.3px;color:#337ab7;letter-spacing:-0.424px;">Age Range</span>
<span class="t" id="t54" style="left:539.30px;top:596.00px;font-size:10.3px;color:#717171;letter-spacing:0.022px;">List Id: 100000000001 - Owner: EMA</span>
<span class="t" id="t55" style="left:539.30px;top:613.00px;font-size:10.3px;color:#717171;letter-spacing:0.120px;">Hierarchical List</span>
<span class="t" id="t56" style="left:1142.00px;top:577.00px;font-size:12.3px;color:#646464;letter-spacing:0.002px;">Mar 7, 2021</span>
<span class="t" id="t57" style="left:1142.10px;top:596.00px;font-size:10.3px;color:#717171;letter-spacing:0.071px;">Version: 27</span>
<span class="t" id="t58" style="left:389.30px;top:638.00px;font-size:12.3px;color:#646464;letter-spacing:-0.021px;">100000093533</span>
<span class="t" id="t59" style="left:389.40px;top:657.00px;font-size:10.3px;color:#717171;transform-origin:0 0;transform:scaleX(0.9307);">Status: CURRENT</span>
<span class="t" id="t60" style="left:389.40px;top:674.00px;font-size:10.3px;color:#717171;letter-spacing:0.225px;">Domain: H</span>
<span class="t" id="t61" style="left:539.40px;top:638.00px;font-size:12.3px;color:#337ab7;letter-spacing:0.089px;">Anatomical Therapeutic Chemical classification system - Human</span>
<span class="t" id="t62" style="left:539.30px;top:657.00px;font-size:10.3px;color:#717171;letter-spacing:0.024px;">Short Name: ATC-H</span>
<span class="t" id="t63" style="left:539.30px;top:674.00px;font-size:10.3px;color:#717171;letter-spacing:-0.030px;">List Id: 100000093533 - Owner: WHO CC</span>
<span class="t" id="t64" style="left:539.30px;top:691.00px;font-size:10.3px;color:#717171;letter-spacing:0.120px;">Hierarchical List</span>
<span class="t" id="t65" style="left:1142.00px;top:638.00px;font-size:12.3px;color:#646464;letter-spacing:-0.257px;">Aug 10, 2021</span>
<span class="t" id="t66" style="left:1142.10px;top:657.00px;font-size:10.3px;color:#717171;letter-spacing:0.044px;">Version: 408</span>
<span class="t" id="t67" style="left:389.30px;top:716.00px;font-size:12.3px;color:#646464;letter-spacing:0.062px;">100000116677</span>
<span class="t" id="t68" style="left:389.40px;top:735.00px;font-size:10.3px;color:#717171;transform-origin:0 0;transform:scaleX(0.9307);">Status: CURRENT</span>
<span class="t" id="t69" style="left:389.40px;top:752.00px;font-size:10.3px;color:#717171;letter-spacing:0.075px;">Domain: V</span>
<span class="t" id="t70" style="left:539.40px;top:716.00px;font-size:12.3px;color:#337ab7;letter-spacing:0.085px;">Anatomical Therapeutic Chemical classification system - Veterinary</span>
<span class="t" id="t71" style="left:539.30px;top:735.00px;font-size:10.3px;color:#717171;letter-spacing:-0.057px;">Short Name: ATC-V</span>
<span class="t" id="t72" style="left:539.30px;top:752.00px;font-size:10.3px;color:#717171;letter-spacing:-0.009px;">List Id: 100000116677 - Owner: WHO CC</span>
<span class="t" id="t73" style="left:1142.00px;top:716.00px;font-size:12.3px;color:#646464;letter-spacing:-0.134px;">May 6, 2021</span>
<span class="t" id="t74" style="left:1142.10px;top:735.00px;font-size:10.3px;color:#717171;letter-spacing:0.071px;">Version: 24</span>
<span class="t" id="t75" style="left:394.30px;top:786.00px;font-size:12.3px;color:#858585;">1</span>
<span class="t" id="t76" style="left:437.60px;top:784.00px;font-size:14.4px;color:#555;letter-spacing:0.152px;">/ 3</span>
<span class="t" id="t77" style="left:624.00px;top:781.00px;font-size:14.4px;color:#444;letter-spacing:0.124px;">items per page</span>
<span class="t" id="t78" style="left:1747.30px;top:786.00px;font-size:14.4px;color:#444;letter-spacing:0.045px;">1 - 50 of 150 items</span>
<span class="t" id="t79" style="left:1116.50px;top:344.00px;font-size:14px;color:#636363;z-index:11;">All</span>
<span class="t" id="t80" style="left:1116.50px;top:378.00px;font-size:14px;color:#636363;z-index:11;">CURRENT</span>
<span class="t" id="t81" style="left:1116.50px;top:412.00px;font-size:14px;color:#636363;z-index:11;">NON_CURRENT</span>
<span class="t" id="t82" style="left:1116.50px;top:446.00px;font-size:14px;color:#636363;z-index:11;">NULLIFIED</span>
<span class="t" id="t83" style="left:1116.50px;top:480.00px;font-size:14px;color:#636363;z-index:11;">PROVISIONAL</span>
<span class="t" id="t84" style="left:287.60px;top:893.00px;font-size:11.2px;color:#666;letter-spacing:-0.185px;">SPORIFY 21.3 Enterprise</span>
<span class="t" id="t85" style="left:1541.60px;top:892.00px;font-size:11.2px;color:#666;letter-spacing:0.096px;">Current Timezone: (UTC+00:00) Dublin, Edinburgh, Lisbon, London</span>
</body>
</html>
